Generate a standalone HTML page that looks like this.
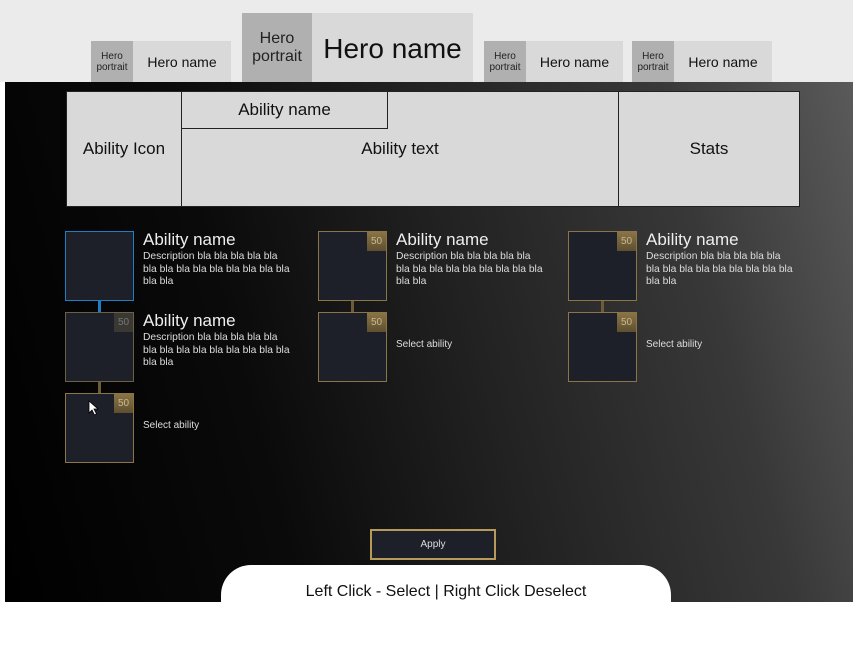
<!DOCTYPE html>
<html><head><style>
*{margin:0;padding:0;box-sizing:border-box}
body{width:853px;height:620px;background:#fff;position:relative;overflow:hidden;font-family:"Liberation Sans",sans-serif}
.top{position:absolute;left:0;top:0;width:853px;height:82px;background:#ebebeb}
.panel{position:absolute;left:5px;top:82px;width:848px;height:520px;background:linear-gradient(75deg,#000 0%,#0a0a0a 30%,#222 55%,#383838 80%,#5a5a5a 100%)}
.a{position:absolute}
.p{background:#b0b0b0;color:#222;text-align:center;display:flex;align-items:center;justify-content:center;line-height:1.1}
.n{background:#d9d9d9;color:#111;display:flex;align-items:center;justify-content:center}
.hb{background:#d9d9d9;border:1px solid #222;color:#111;font-size:17px;display:flex;align-items:center;justify-content:center}
.sq{position:absolute;width:69px;height:70px;background:#1d2028;border:1px solid #8a7448}
.b{position:absolute;right:0;top:0;width:19px;height:19px;background:linear-gradient(#8a7446,#5e4f30);color:#c9b992;font-size:10px;display:flex;align-items:center;justify-content:center}
.t{position:absolute;color:#eee}
.t h{display:block;font-size:17px;line-height:18px}
.t p{font-size:10.3px;line-height:12.5px;color:#ddd;margin-top:2px;white-space:nowrap}
.s{position:absolute;color:#ddd;font-size:10px}
.v{position:absolute;width:3px;height:12px;background:#6e5c36}
</style></head><body>
<div class="top"></div>
<div class="a p" style="left:91px;top:41px;width:42px;height:41px;font-size:10px">Hero<br>portrait</div>
<div class="a n" style="left:133px;top:41px;width:98px;height:41px;font-size:14px">Hero name</div>
<div class="a p" style="left:242px;top:13px;width:70px;height:69px;font-size:16px">Hero<br>portrait</div>
<div class="a n" style="left:312px;top:13px;width:161px;height:69px;font-size:28px;padding-top:2px">Hero name</div>
<div class="a p" style="left:484px;top:41px;width:42px;height:41px;font-size:10px">Hero<br>portrait</div>
<div class="a n" style="left:526px;top:41px;width:97px;height:41px;font-size:14px">Hero name</div>
<div class="a p" style="left:632px;top:41px;width:42px;height:41px;font-size:10px">Hero<br>portrait</div>
<div class="a n" style="left:674px;top:41px;width:98px;height:41px;font-size:14px">Hero name</div>
<div class="panel"></div>
<div class="a hb" style="left:66px;top:91px;width:116px;height:116px">Ability Icon</div>
<div class="a hb" style="left:181px;top:91px;width:438px;height:116px;padding-top:0">Ability text</div>
<div class="a hb" style="left:181px;top:91px;width:207px;height:38px">Ability name</div>
<div class="a hb" style="left:618px;top:91px;width:182px;height:116px">Stats</div>

<div class="sq" style="left:65px;top:231px;border-color:#1f7fc4"></div>
<div class="a" style="left:98px;top:301px;width:3px;height:11px;background:#1f7fc4"></div>
<div class="sq" style="left:65px;top:312px;border-color:#6a6048"><div class="b" style="background:#3a3832;color:#777">50</div></div>
<div class="v" style="left:98px;top:382px;height:11px"></div>
<div class="sq" style="left:65px;top:393px"><div class="b">50</div></div>
<svg class="a" style="left:88px;top:400px" width="12" height="16" viewBox="0 0 12 16"><path d="M1 1 L1 13 L4 10 L6.5 15 L8.5 14 L6 9 L10 9 Z" fill="#fff" stroke="#000" stroke-width="0.8"/></svg>
<div class="t" style="left:143px;top:231px"><h>Ability name</h><p>Description bla bla bla bla bla<br>bla bla bla bla bla bla bla bla bla<br>bla bla</p></div>
<div class="t" style="left:143px;top:312px"><h>Ability name</h><p>Description bla bla bla bla bla<br>bla bla bla bla bla bla bla bla bla<br>bla bla</p></div>
<div class="s" style="left:143px;top:420px">Select ability</div>

<div class="sq" style="left:318px;top:231px"><div class="b">50</div></div>
<div class="v" style="left:351px;top:301px;height:11px"></div>
<div class="sq" style="left:318px;top:312px"><div class="b">50</div></div>
<div class="t" style="left:396px;top:231px"><h>Ability name</h><p>Description bla bla bla bla bla<br>bla bla bla bla bla bla bla bla bla<br>bla bla</p></div>
<div class="s" style="left:396px;top:339px">Select ability</div>

<div class="sq" style="left:568px;top:231px"><div class="b">50</div></div>
<div class="v" style="left:601px;top:301px;height:11px"></div>
<div class="sq" style="left:568px;top:312px"><div class="b">50</div></div>
<div class="t" style="left:646px;top:231px"><h>Ability name</h><p>Description bla bla bla bla bla<br>bla bla bla bla bla bla bla bla bla<br>bla bla</p></div>
<div class="s" style="left:646px;top:339px">Select ability</div>

<div class="a" style="left:370px;top:529px;width:126px;height:31px;background:#1d2028;border:2px solid #b79a5a;color:#ddd;font-size:10px;display:flex;align-items:center;justify-content:center">Apply</div>
<div class="a" style="left:221px;top:565px;width:450px;height:80px;background:#fff;border-radius:30px"></div>
<div class="a" style="left:221px;top:583px;width:450px;text-align:center;font-size:16px;color:#111">Left Click - Select | Right Click Deselect</div>
</body></html>
